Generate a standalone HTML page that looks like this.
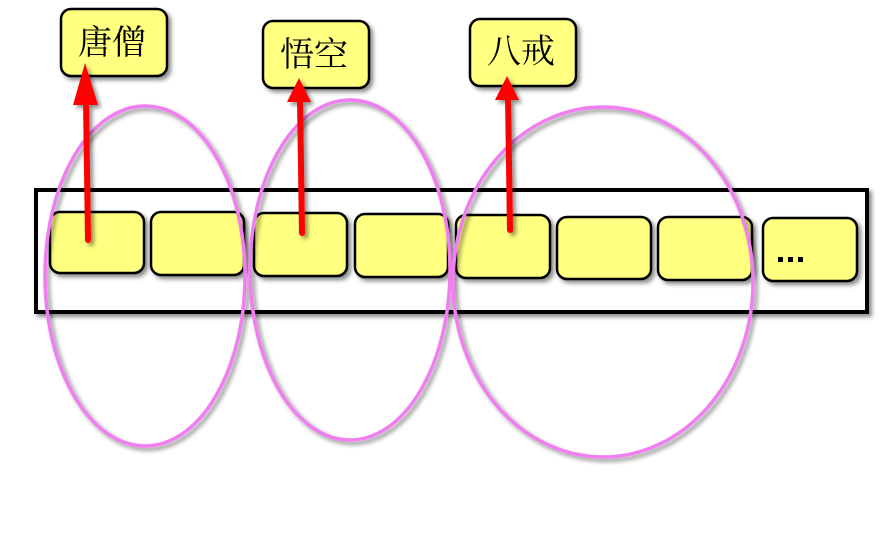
<!DOCTYPE html>
<html><head><meta charset="utf-8"><style>html,body{margin:0;padding:0;background:#fff}svg{display:block}</style></head>
<body>
<svg width="893" height="539" viewBox="0 0 893 539" xmlns="http://www.w3.org/2000/svg">
<defs>
<filter id="sh" x="-10%" y="-10%" width="130%" height="130%">
<feDropShadow dx="3" dy="3" stdDeviation="2" flood-color="#000" flood-opacity="0.45"/>
</filter>
</defs>
<rect x="36" y="190" width="831" height="122" fill="#fff" stroke="#000" stroke-width="4" filter="url(#sh)"/>
<g fill="#ffff80" stroke="#000" stroke-width="2.5" filter="url(#sh)">
<rect x="50" y="212" width="94" height="61" rx="10"/>
<rect x="151" y="212" width="93" height="63" rx="10"/>
<rect x="254" y="213" width="93" height="63" rx="10"/>
<rect x="355" y="214" width="93" height="63" rx="10"/>
<rect x="456" y="215" width="94" height="63" rx="10"/>
<rect x="557" y="217" width="94" height="62" rx="10"/>
<rect x="658" y="217" width="94" height="63" rx="10"/>
<rect x="763" y="218" width="94" height="63" rx="10"/>
</g>
<g fill="#000"><rect x="778" y="257" width="5" height="5"/><rect x="788" y="257" width="5" height="5"/><rect x="798" y="257" width="5" height="5"/></g>
<g fill="none" stroke="#f07ef0" stroke-width="3.5" filter="url(#sh)">
<ellipse cx="145" cy="276" rx="100" ry="170"/>
<ellipse cx="350" cy="270" rx="100" ry="170"/>
<ellipse cx="603" cy="282" rx="150" ry="175"/>
</g>
<g fill="#ffff80" stroke="#000" stroke-width="2.5" filter="url(#sh)">
<rect x="61" y="9" width="106" height="67" rx="10"/>
<rect x="263" y="21" width="106" height="67" rx="10"/>
<rect x="470" y="19" width="106" height="67" rx="10"/>
</g>
<g font-family="'Liberation Serif','Noto Serif CJK SC',serif" font-size="34" fill="#000" text-anchor="middle">
<text x="112" y="54">唐僧</text>
<text x="314" y="66">悟空</text>
<text x="521" y="63">八戒</text>
</g>
<g fill="#f00" stroke="#f00" filter="url(#sh)">
<line x1="88" y1="240" x2="86" y2="100" stroke-width="6" stroke-linecap="round"/>
<polygon points="85,63 73,105 98,105" stroke="none"/>
<line x1="302" y1="233" x2="300" y2="98" stroke-width="6" stroke-linecap="round"/>
<polygon points="299,78 287,102 311,102" stroke="none"/>
<line x1="510" y1="230" x2="508" y2="96" stroke-width="6" stroke-linecap="round"/>
<polygon points="507,76 495,100 519,100" stroke="none"/>
</g>
</svg>
</body></html>
